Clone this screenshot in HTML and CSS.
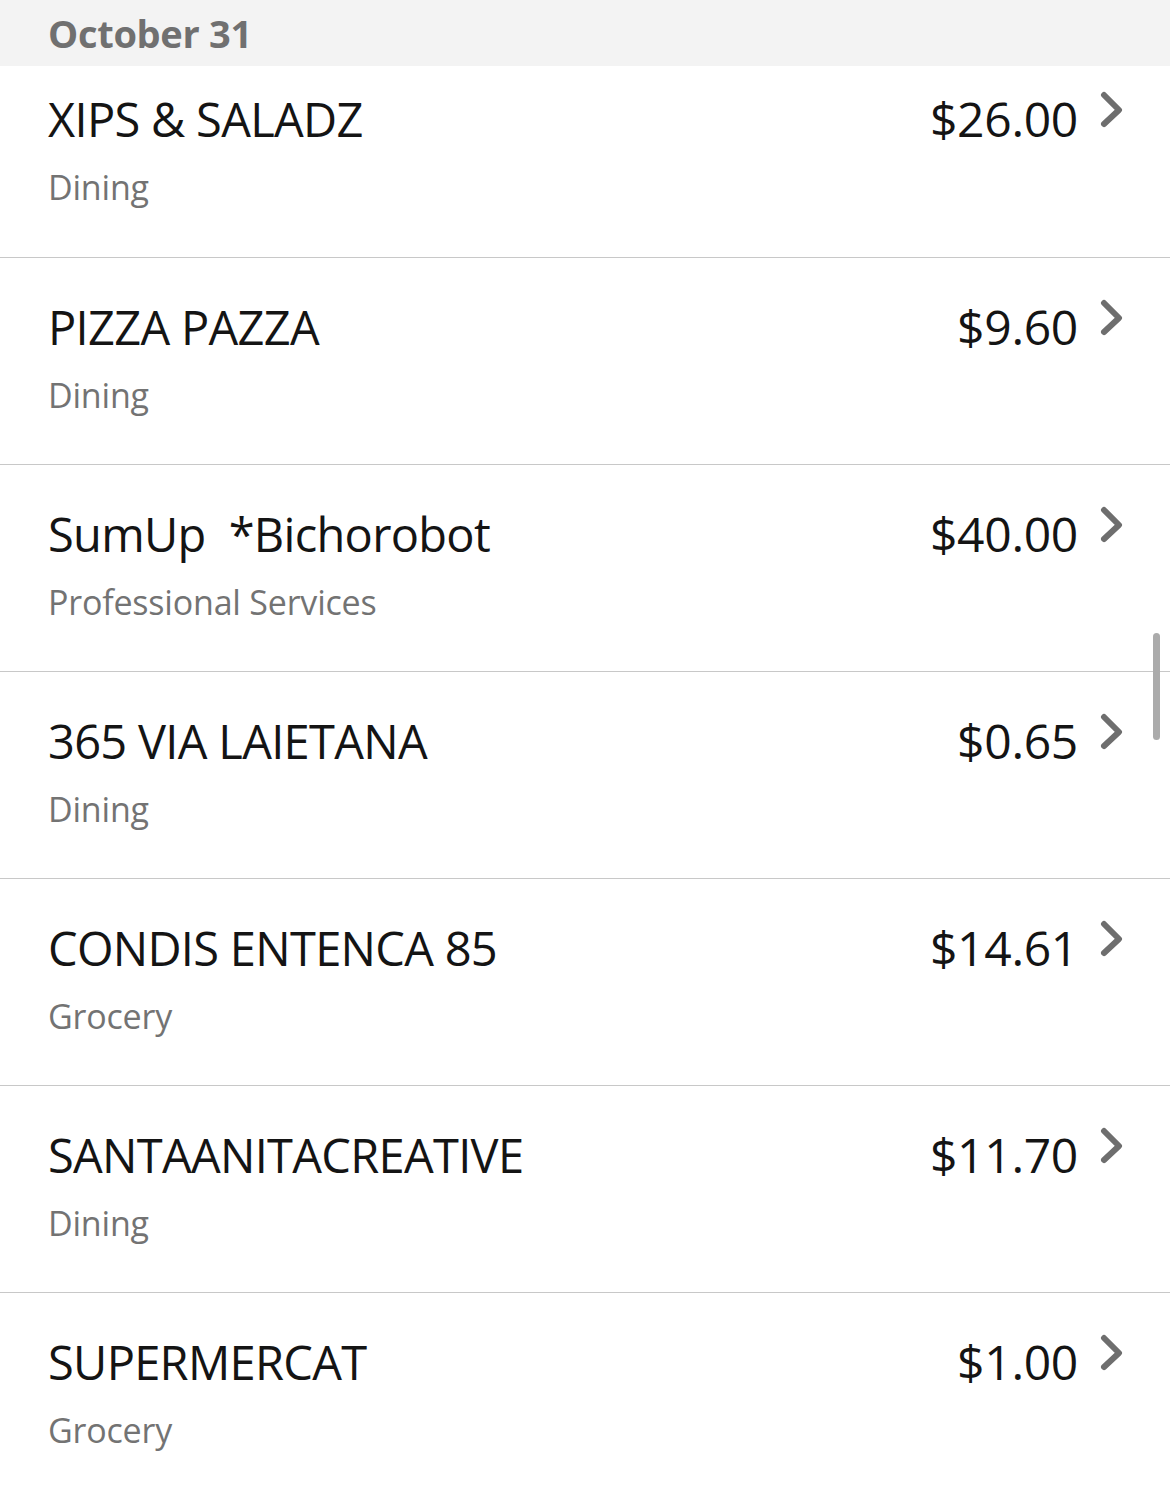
FILE: index.html
```html
<!DOCTYPE html>
<html lang="en">
<head>
<meta charset="utf-8">
<title>Transactions</title>
<link rel="stylesheet" href="styles.css">
</head>
<body>
<div class="screen">
  <div class="date-header">October 31</div>
  <ul class="list">
    <li class="row first">
      <div class="info"><div class="merchant">XIPS &amp; SALADZ</div><div class="category">Dining</div></div>
      <div class="amount">$26.00</div>
      <svg class="chev" viewBox="0 0 24 38" width="24" height="38"><polyline points="4,4 19,19 4,33"/></svg>
    </li>
    <li class="row">
      <div class="info"><div class="merchant">PIZZA PAZZA</div><div class="category">Dining</div></div>
      <div class="amount">$9.60</div>
      <svg class="chev" viewBox="0 0 24 38" width="24" height="38"><polyline points="4,4 19,19 4,33"/></svg>
    </li>
    <li class="row">
      <div class="info"><div class="merchant">SumUp&nbsp; *Bichorobot</div><div class="category">Professional Services</div></div>
      <div class="amount">$40.00</div>
      <svg class="chev" viewBox="0 0 24 38" width="24" height="38"><polyline points="4,4 19,19 4,33"/></svg>
    </li>
    <li class="row">
      <div class="info"><div class="merchant">365 VIA LAIETANA</div><div class="category">Dining</div></div>
      <div class="amount">$0.65</div>
      <svg class="chev" viewBox="0 0 24 38" width="24" height="38"><polyline points="4,4 19,19 4,33"/></svg>
    </li>
    <li class="row">
      <div class="info"><div class="merchant">CONDIS ENTENCA 85</div><div class="category">Grocery</div></div>
      <div class="amount">$14.61</div>
      <svg class="chev" viewBox="0 0 24 38" width="24" height="38"><polyline points="4,4 19,19 4,33"/></svg>
    </li>
    <li class="row">
      <div class="info"><div class="merchant">SANTAANITACREATIVE</div><div class="category">Dining</div></div>
      <div class="amount">$11.70</div>
      <svg class="chev" viewBox="0 0 24 38" width="24" height="38"><polyline points="4,4 19,19 4,33"/></svg>
    </li>
    <li class="row">
      <div class="info"><div class="merchant">SUPERMERCAT</div><div class="category">Grocery</div></div>
      <div class="amount">$1.00</div>
      <svg class="chev" viewBox="0 0 24 38" width="24" height="38"><polyline points="4,4 19,19 4,33"/></svg>
    </li>
  </ul>
  <div class="scrollbar"></div>
</div>
</body>
</html>
```

FILE: styles.css
```css
html, body {
  margin: 0;
  padding: 0;
  background: #ffffff;
}
body {
  font-family: "Open Sans", "Noto Sans", sans-serif;
}
.screen {
  position: relative;
  width: 1170px;
  height: 1500px;
  overflow: hidden;
}
.date-header {
  height: 66px;
  box-sizing: border-box;
  background: #f3f3f3;
  padding: 8px 0 0 48px;
  font-size: 38px;
  font-weight: 700;
  line-height: 50px;
  letter-spacing: -0.3px;
  color: #707070;
}
.list {
  list-style: none;
  margin: 0;
  padding: 0;
}
.row {
  display: flex;
  align-items: flex-start;
  height: 207px;
  box-sizing: border-box;
  padding: 39px 46px 0 48px;
  border-top: 1px solid #c8c8c8;
}
.row.first {
  height: 191px;
  padding-top: 23px;
  border-top: none;
}
.info {
  flex: 1;
}
.merchant {
  font-size: 47px;
  line-height: 60px;
  letter-spacing: -0.7px;
  color: #141414;
  white-space: pre;
}
.category {
  margin-top: 16px;
  font-size: 34px;
  line-height: 44px;
  letter-spacing: -0.2px;
  color: #737373;
}
.amount {
  font-size: 48px;
  line-height: 60px;
  letter-spacing: -0.3px;
  color: #141414;
}
.chev {
  margin-left: 22px;
  margin-top: 2px;
  fill: none;
  stroke: #6e6e6e;
  stroke-width: 6;
  stroke-linecap: round;
  stroke-linejoin: round;
}
.scrollbar {
  position: absolute;
  left: 1153px;
  top: 633px;
  width: 7px;
  height: 107px;
  border-radius: 4px;
  background: #ababab;
}
```
